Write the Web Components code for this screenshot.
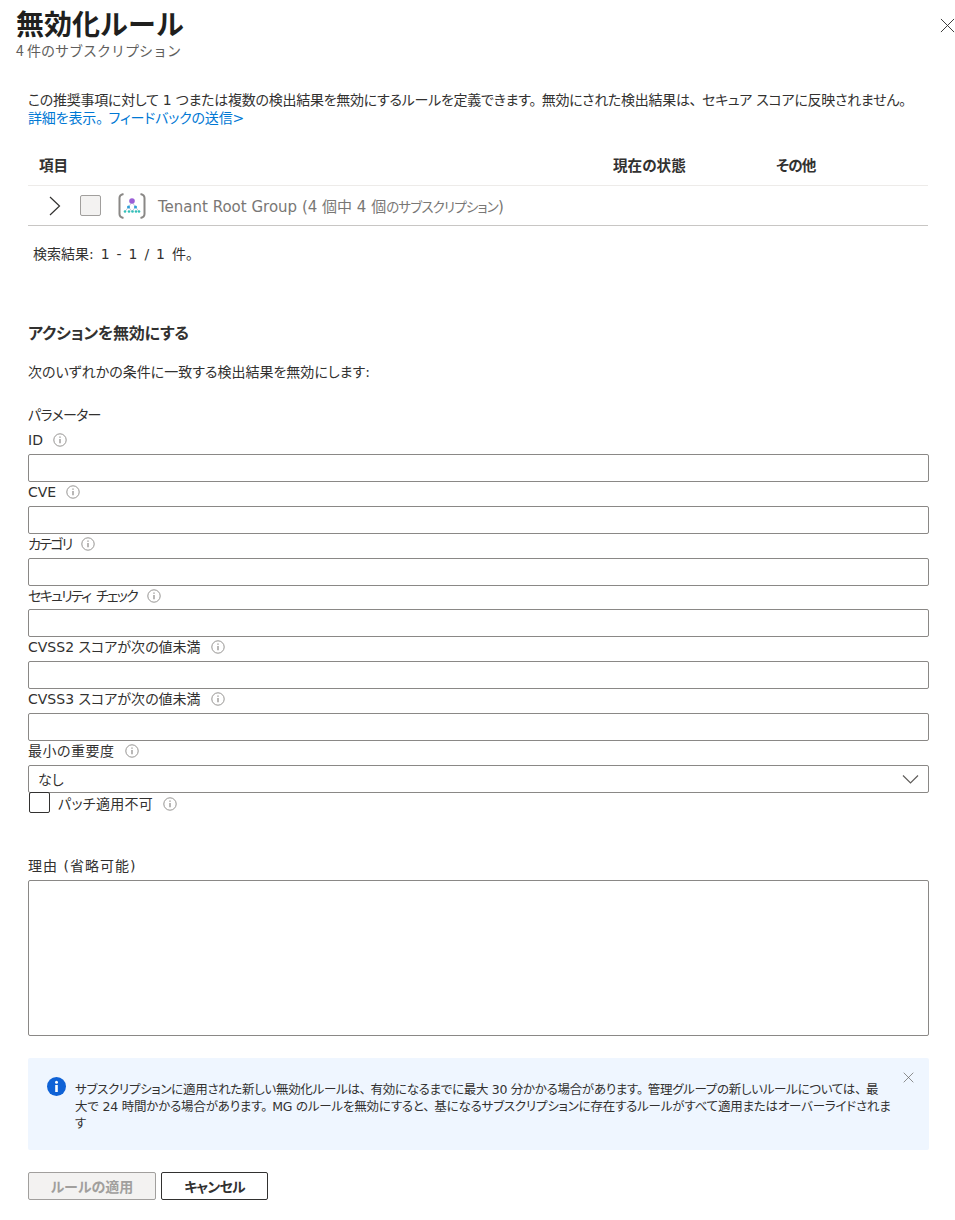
<!DOCTYPE html>
<html lang="ja">
<head>
<meta charset="utf-8">
<title>無効化ルール</title>
<style>
  html, body { margin: 0; background: #fff; }
  body {
    font-family: "DejaVu Sans", "Noto Sans CJK JP", sans-serif;
    font-size: 14px;
    color: #323130;
  }
  .p { padding-right: .4em; }
  .line2 { letter-spacing: -.2px; }
</style>
</head>
<body>
<rule-panel>
  <panel-header slot="header" title-text="無効化ルール" sub-text="4 件のサブスクリプション"></panel-header>
  <p-intro></p-intro>
  <scope-table></scope-table>
  <rule-form></rule-form>
  <info-banner>サブスクリプションに適用された新しい無効化ルールは<span class="p">、</span>有効になるまでに最大 30 分かかる場合があります<span class="p">。</span>管理グループの新しいルールについては<span class="p">、</span>最<br><span class="line2">大で 24 時間かかる場合があります<span class="p">。</span>MG のルールを無効にすると<span class="p">、</span>基になるサブスクリプションに存在するルールがすべて適用またはオーバーライドされま</span><br>す</info-banner>
  <action-bar></action-bar>
</rule-panel>
<script>
const FONT = `"DejaVu Sans", "Noto Sans CJK JP", sans-serif`;
const CLOSE = (size, color) => `<svg width="${size}" height="${size}" viewBox="0 0 16 16" fill="none" stroke="${color}" stroke-width="1"><path d="M1 1L15 15M15 1L1 15"/></svg>`;

class RulePanel extends HTMLElement {
  constructor() {
    super();
    this.attachShadow({ mode: "open" }).innerHTML = `
    <style>
      :host { display: block; width: 955px; height: 1220px; overflow: hidden; font-family: ${FONT}; font-feature-settings: "palt"; }
      main { display: flex; flex-direction: column; }
    </style>
    <slot name="header"></slot>
    <main><slot></slot></main>`;
  }
}

class PanelHeader extends HTMLElement {
  connectedCallback() {
    this.attachShadow({ mode: "open" }).innerHTML = `
    <style>
      :host { display: flex; justify-content: space-between; padding: 0 0 0 16px; height: 91px; box-sizing: border-box; font-feature-settings: normal; }
      h1 { margin: 5px 0 0; font: 700 28px/36px "Noto Sans CJK JP", sans-serif; color: #201f1e; }
      p { margin: 0; font: 14px/18px "Noto Sans CJK JP", sans-serif; color: #605e5c; }
      .x { padding-top: 18px; width: 15px; }
      svg { display: block; }
    </style>
    <div>
      <h1>${this.getAttribute("title-text")}</h1>
      <p>${this.getAttribute("sub-text")}</p>
    </div>
    <div class="x">${CLOSE(15, "#323130")}</div>`;
  }
}

class PIntro extends HTMLElement {
  constructor() {
    super();
    this.attachShadow({ mode: "open" }).innerHTML = `
    <style>
      :host { display: block; padding: 0 28px; font-size: 14px; line-height: 18px; color: #323130; height: 54px; }
      a { color: #0078d4; text-decoration: none; }
      div { white-space: nowrap; letter-spacing: -.27px; }
      .link { letter-spacing: -.15px; }
      .p { padding-right: .4em; }
    </style>
    <div>この推奨事項に対して 1 つまたは複数の検出結果を無効にするルールを定義できます<span class="p">。</span>無効にされた検出結果は<span class="p">、</span>セキュア スコアに反映されません。</div>
    <div class="link"><a href="#">詳細を表示<span class="p">。</span></a><a href="#">フィードバックの送信&gt;</a></div>`;
  }
}

class ScopeTable extends HTMLElement {
  constructor() {
    super();
    this.attachShadow({ mode: "open" }).innerHTML = `
    <style>
      :host { display: block; margin: 0 27px 0 28px; font-size: 14px; }
      .head { display: grid; grid-template-columns: 585px 163px 1fr; height: 41px; align-items: center; padding-bottom: 1px; box-sizing: border-box; font-weight: 700; font-size: 14.600px; border-bottom: 1px solid #edebe9; color: #323130; }
      .head span:first-child { padding-left: 11px; }
      .head span:last-child { letter-spacing: -.8px; }
      .row { display: flex; align-items: center; height: 40px; box-sizing: border-box; border-bottom: 1px solid #c8c6c4; color: #797775; font-size: 15px; white-space: nowrap; }
      .row small { font-size: 13.500px; letter-spacing: -.8px; }
      .chev { margin-left: 20px; width: 13px; }
      .check { width: 19px; height: 19px; margin-left: 19px; background: #f3f2f1; border: 1px solid #a19f9d; border-radius: 2px; }
      .logo { margin-left: 17px; margin-right: 12px; }
      svg { display: block; }
      .found { display: block; padding: 19px 0 0 5px; line-height: 18px; white-space: pre; word-spacing: 2.500px; }
    </style>
    <div class="head"><span>項目</span><span>現在の状態</span><span>その他</span></div>
    <div class="row">
      <svg class="chev" width="13" height="20" viewBox="0 0 13 20" fill="none" stroke="#323130" stroke-width="1.2"><path d="M2 1l9.500 9L2 19"/></svg>
      <span class="check"></span>
      <svg class="logo" width="28" height="26" viewBox="0 0 28 26" fill="none">
        <path d="M5.500 1C3 1.500 1.500 3 1.500 5v16c0 2 1.500 3.500 4 4M22.500 1c2.500.5 4 2 4 4v16c0 2-1.500 3.500-4 4" stroke="#8a8886" stroke-width="2"/>
        <path d="M14 9l-3.500 5M14 9l3.500 5M10.500 14L7 18.500M10.500 14L14 18.500M17.500 14L14 18.500M17.500 14L21 18.500" stroke="#a8b8c8" stroke-width=".7"/>
        <circle cx="14" cy="8" r="2.800" fill="#9b5fd6"/>
        <circle cx="10.500" cy="14" r="1.500" fill="#2d9fd8"/>
        <circle cx="17.500" cy="14" r="1.500" fill="#2d9fd8"/>
        <circle cx="7" cy="18.500" r="1.300" fill="#32bfb8"/>
        <circle cx="11" cy="18.500" r="1.300" fill="#32bfb8"/>
        <circle cx="14.500" cy="18.500" r="1.300" fill="#32bfb8"/>
        <circle cx="18" cy="18.500" r="1.300" fill="#32bfb8"/>
        <circle cx="21" cy="18.500" r="1.300" fill="#32bfb8"/>
      </svg>
      <span>Tenant Root Group (4 個中 4 個<small>のサブスクリプション</small>)</span>
    </div>
    <span class="found">検索結果: 1 - 1 / 1 件。</span>`;
  }
}

class InfoTip extends HTMLElement {
  constructor() {
    super();
    this.attachShadow({ mode: "open" }).innerHTML = `
    <style>
      :host { display: inline-block; width: 14px; height: 14px; margin-left: 10px; vertical-align: -2px; letter-spacing: 0; }
      svg { display: block; }
    </style>
    <svg width="14" height="14" viewBox="0 0 14 14" fill="none" stroke="#8a8886"><circle cx="7" cy="7" r="6.200" stroke-width=".9"/><path d="M7 6v4.200" stroke-width="1.200"/><path d="M7 3.600v1.200" stroke-width="1.200"/></svg>`;
  }
}

class FormField extends HTMLElement {
  connectedCallback() {
    const select = this.hasAttribute("select");
    const area = this.hasAttribute("area");
    this.attachShadow({ mode: "open" }).innerHTML = `
    <style>
      :host { display: block; }
      label { display: block; height: 23.750px; line-height: 20px; white-space: nowrap; color: #323130; letter-spacing: ${this.getAttribute("spacing") || 0}px; word-spacing: ${this.getAttribute("word") || 0}px; }
      .box { box-sizing: border-box; width: 901px; height: 28px; border: 1px solid #8a8886; border-radius: 2px; background: #fff; display: flex; align-items: center; justify-content: space-between; padding: 0 9px; }
      .area { height: 156px; }
      svg { display: block; }
    </style>
    <label>${this.getAttribute("label")}${this.hasAttribute("notip") ? "" : "<info-tip></info-tip>"}</label>
    <div class="box ${area ? "area" : ""}">${select ? `<span>なし</span><svg width="17" height="10" viewBox="0 0 17 10" fill="none" stroke="#605e5c" stroke-width="1.200"><path d="M1 1.500l7.500 7.500L16 1.500"/></svg>` : ""}</div>`;
  }
}

class RuleForm extends HTMLElement {
  constructor() {
    super();
    this.attachShadow({ mode: "open" }).innerHTML = `
    <style>
      :host { display: block; padding: 0 26px 0 28px; }
      h2 { margin: 60px 0 0; font-size: 16px; line-height: 22px; font-weight: 700; color: #323130; letter-spacing: -.2px; }
      p { margin: 16px 0 0; line-height: 22px; }
      .param { margin: 21px 0 0; line-height: 22px; letter-spacing: -.7px; }
      .fields { display: flex; flex-direction: column; margin-top: 4.250px; }
      .check { display: flex; align-items: center; height: 20px; white-space: nowrap; letter-spacing: .3px; }
      .check i { box-sizing: border-box; width: 21px; height: 21px; margin-left: 1px; margin-right: 8px; border: 1px solid #323130; border-radius: 2px; }
      .reason { margin-top: 43.750px; }
    </style>
    <h2>アクションを無効にする</h2>
    <p>次のいずれかの条件に一致する検出結果を無効にします:</p>
    <div class="param">パラメーター</div>
    <div class="fields">
      <form-field label="ID"></form-field>
      <form-field label="CVE"></form-field>
      <form-field label="カテゴリ" spacing="-1.700"></form-field>
      <form-field label="セキュリティ チェック" spacing="-1.700" word="3"></form-field>
      <form-field label="CVSS2 スコアが次の値未満"></form-field>
      <form-field label="CVSS3 スコアが次の値未満"></form-field>
      <form-field label="最小の重要度" spacing=".5" select></form-field>
    </div>
    <div class="check"><i></i><span>パッチ適用不可<info-tip></info-tip></span></div>
    <form-field class="reason" label="理由 (省略可能)" spacing="1" notip area></form-field>`;
  }
}

class InfoBanner extends HTMLElement {
  constructor() {
    super();
    this.attachShadow({ mode: "open" }).innerHTML = `
    <style>
      :host { display: flex; box-sizing: border-box; width: 901px; height: 92px; margin: 22px 0 0 28px; padding: 20px 0 0 19px; background: #eff6ff; border-radius: 2px; position: relative; font-size: 12.500px; line-height: 17px; color: #323130; letter-spacing: -.3px; }
      .ico { flex: none; width: 19px; height: 19px; margin: -1px 9px 0 0; }
      .txt { white-space: nowrap; padding-top: 3px; }
      .close { position: absolute; top: 14px; right: 15px; }
      svg { display: block; }
    </style>
    <svg class="ico" viewBox="0 0 19 19"><circle cx="9.500" cy="9.500" r="9.500" fill="#0f62d6"/><rect x="8.200" y="8" width="2.600" height="7" fill="#fff"/><circle cx="9.500" cy="5.300" r="1.500" fill="#fff"/></svg>
    <div class="txt"><slot></slot></div>
    <div class="close">${CLOSE(11, "#605e5c")}</div>`;
  }
}

class ActionBar extends HTMLElement {
  constructor() {
    super();
    this.attachShadow({ mode: "open" }).innerHTML = `
    <style>
      :host { display: flex; gap: 5px; margin: 22px 0 0 28px; }
      button { box-sizing: border-box; height: 28px; font: 700 14px ${FONT}; font-feature-settings: "palt"; border-radius: 2px; padding: 0; }
      .apply { width: 128px; background: #f3f2f1; border: 1px solid #a19f9d; color: #a19f9d; }
      .cancel { width: 107px; background: #fff; border: 1px solid #323130; color: #323130; letter-spacing: -.8px; }
    </style>
    <button class="apply" disabled>ルールの適用</button>
    <button class="cancel">キャンセル</button>`;
  }
}

customElements.define("info-tip", InfoTip);
customElements.define("form-field", FormField);
customElements.define("panel-header", PanelHeader);
customElements.define("p-intro", PIntro);
customElements.define("scope-table", ScopeTable);
customElements.define("rule-form", RuleForm);
customElements.define("info-banner", InfoBanner);
customElements.define("action-bar", ActionBar);
customElements.define("rule-panel", RulePanel);
</script>
</body>
</html>
